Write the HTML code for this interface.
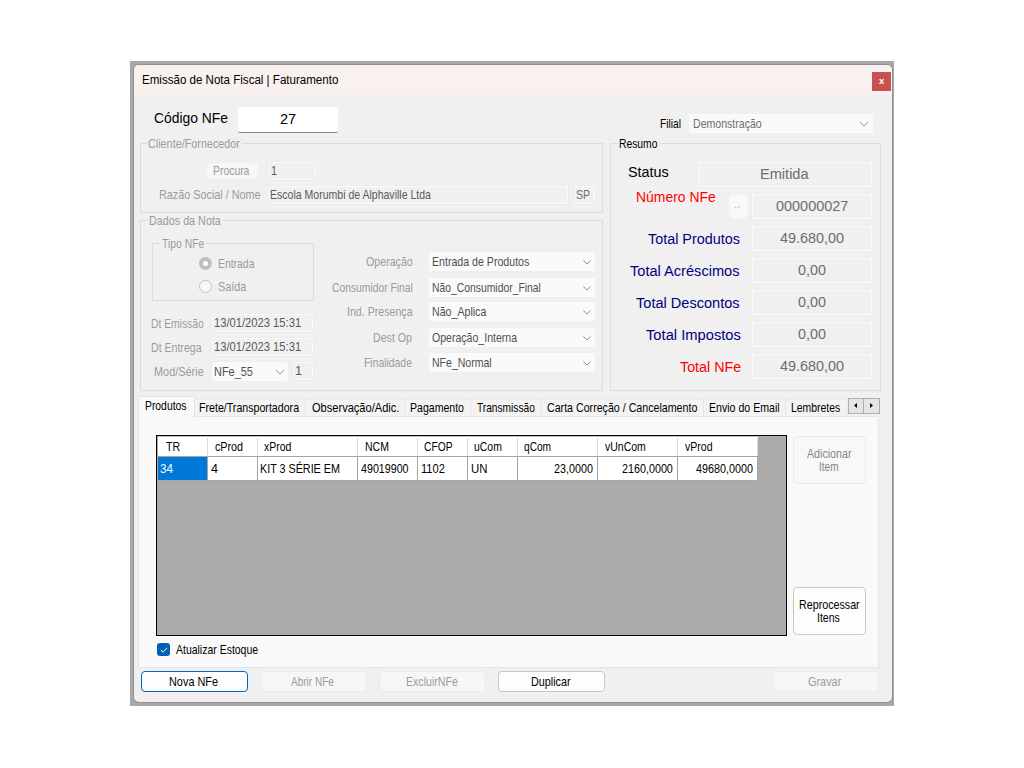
<!DOCTYPE html>
<html lang="pt-BR"><head><meta charset="utf-8"><title>Emissão de Nota Fiscal | Faturamento</title>
<style>
html,body{margin:0;padding:0;background:#fff;}
body{width:1024px;height:768px;position:relative;overflow:hidden;font-family:"Liberation Sans", sans-serif;}
.b{position:absolute;box-sizing:border-box;}
.t{position:absolute;white-space:pre;font-family:"Liberation Sans", sans-serif;transform-origin:0 0;}
svg{position:absolute;overflow:visible;}
</style></head><body>
<div class="b" style="left:130px;top:61px;width:764px;height:645px;background:#a8a8a8;"></div>
<div class="b" style="left:133px;top:64px;width:760px;height:639px;background:#929292;border-radius:6px;"></div>
<div class="b" style="left:134px;top:65px;width:758px;height:637px;background:#f0f0f0;border-radius:5px;"></div>
<div class="b" style="left:134px;top:65px;width:758px;height:30px;background:#f9f0f0;border-radius:5px 5px 0 0;"></div>
<span class="t" id="t0" style="left:141.56px;top:73.26px;font-size:12.3px;line-height:14.76px;color:#000;transform:scaleX(0.9399);">Emissão de Nota Fiscal | Faturamento</span>
<div class="b" style="left:872px;top:72px;width:19px;height:19px;background:#c75050;"></div>
<span class="t" id="t1" style="left:879.0px;top:74.91px;font-size:9.6px;line-height:11.52px;color:#fff;font-weight:700;">x</span>
<span class="t" id="t2" style="left:153.52px;top:110.26px;font-size:14.2px;line-height:17.04px;color:#000;transform:scaleX(0.9784);">Código NFe</span>
<div class="b" style="left:238px;top:107px;width:100px;height:26px;background:#fff;border-bottom:1px solid #868686;border-radius:2px;"></div>
<span class="t" id="t3" style="left:279.83px;top:111.26px;font-size:14.2px;line-height:17.04px;color:#000;transform:scaleX(1.0214);">27</span>
<span class="t" id="t4" style="left:660.49px;top:116.77px;font-size:12.6px;line-height:15.12px;color:#000;transform:scaleX(0.8125);">Filial</span>
<div class="b" style="left:689px;top:113.5px;width:183.5px;height:19.5px;background:#fafafa;border-radius:1.5px;box-shadow:0 0 0 0.5px #ededed;"></div>
<svg style="left:860.1px;top:121.65px" width="8" height="4.5" viewBox="0 0 8 4.5"><path d="M0.3 0.4 L4 4 L7.7 0.4" fill="none" stroke="#8c8c8c" stroke-width="0.95"/></svg>
<span class="t" id="t5" style="left:693.16px;top:117.17px;font-size:12.6px;line-height:15.12px;color:#6d6d6d;transform:scaleX(0.8395);">Demonstração</span>
<div class="b" style="left:140px;top:143px;width:463px;height:70px;border:1px solid #dcdcdc;"></div>
<div class="b" style="left:147px;top:142px;width:95px;height:3px;background:#f0f0f0;"></div>
<span class="t" id="t6" style="left:148.14px;top:136.77px;font-size:12.6px;line-height:15.12px;color:#9b9b9b;transform:scaleX(0.8585);">Cliente/Fornecedor</span>
<div class="b" style="left:206px;top:162px;width:53px;height:18px;background:#f7f7f7;border:1px solid #eeeeee;border-radius:4px;"></div>
<span class="t" id="t7" style="left:212.72px;top:163.97px;font-size:12.6px;line-height:15.12px;color:#9b9b9b;transform:scaleX(0.8256);">Procura</span>
<div class="b" style="left:268px;top:162px;width:48px;height:18px;background:#f0f0f0;border:1px solid #fafafa;box-shadow:0 0 0 1px #ececec;"></div>
<span class="t" id="t8" style="left:270.55px;top:163.97px;font-size:12.6px;line-height:15.12px;color:#5a5a5a;transform:scaleX(0.85);">1</span>
<span class="t" id="t9" style="left:158.64px;top:187.97px;font-size:12.6px;line-height:15.12px;color:#9b9b9b;transform:scaleX(0.859);">Razão Social / Nome</span>
<div class="b" style="left:268px;top:186px;width:300px;height:18px;background:#f0f0f0;border:1px solid #fafafa;box-shadow:0 0 0 1px #ececec;"></div>
<span class="t" id="t10" style="left:269.66px;top:187.97px;font-size:12.6px;line-height:15.12px;color:#5a5a5a;transform:scaleX(0.8359);">Escola Morumbi de Alphaville Ltda</span>
<div class="b" style="left:575px;top:186px;width:20px;height:18px;background:#f0f0f0;border:1px solid #fafafa;box-shadow:0 0 0 1px #ececec;"></div>
<span class="t" id="t11" style="left:576.47px;top:187.97px;font-size:12.6px;line-height:15.12px;color:#6d6d6d;transform:scaleX(0.8333);">SP</span>
<div class="b" style="left:140px;top:220px;width:463px;height:171px;border:1px solid #dcdcdc;"></div>
<div class="b" style="left:147.5px;top:219px;width:75px;height:3px;background:#f0f0f0;"></div>
<span class="t" id="t12" style="left:148.64px;top:213.77px;font-size:12.6px;line-height:15.12px;color:#9b9b9b;transform:scaleX(0.8554);">Dados da Nota</span>
<div class="b" style="left:152px;top:243px;width:162px;height:58px;border:1px solid #dcdcdc;"></div>
<div class="b" style="left:160px;top:242px;width:46px;height:3px;background:#f0f0f0;"></div>
<span class="t" id="t13" style="left:162.0px;top:236.77px;font-size:12.6px;line-height:15.12px;color:#9b9b9b;transform:scaleX(0.8235);">Tipo NFe</span>
<div class="b" style="left:199px;top:257px;width:13px;height:13px;background:#bfbfbf;border-radius:7px;"></div>
<div class="b" style="left:203px;top:261px;width:5px;height:5px;background:#fff;border-radius:3px;"></div>
<div class="b" style="left:199px;top:280px;width:13px;height:13px;background:#f9f9f9;border:1px solid #c0c0c0;border-radius:7px;"></div>
<span class="t" id="t14" style="left:217.67px;top:256.77px;font-size:12.6px;line-height:15.12px;color:#9b9b9b;transform:scaleX(0.8256);">Entrada</span>
<span class="t" id="t15" style="left:217.64px;top:279.57px;font-size:12.6px;line-height:15.12px;color:#9b9b9b;transform:scaleX(0.8594);">Saída</span>
<span class="t" id="t16" style="left:150.68px;top:316.97px;font-size:12.6px;line-height:15.12px;color:#9b9b9b;transform:scaleX(0.8175);">Dt Emissão</span>
<div class="b" style="left:212px;top:314px;width:101px;height:18px;background:#f0f0f0;border:1px solid #fafafa;box-shadow:0 0 0 1px #ececec;"></div>
<span class="t" id="t17" style="left:213.91px;top:315.97px;font-size:12.6px;line-height:15.12px;color:#5a5a5a;transform:scaleX(0.8887);">13/01/2023 15:31</span>
<span class="t" id="t18" style="left:150.66px;top:340.97px;font-size:12.6px;line-height:15.12px;color:#9b9b9b;transform:scaleX(0.839);">Dt Entrega</span>
<div class="b" style="left:212px;top:338px;width:101px;height:18px;background:#f0f0f0;border:1px solid #fafafa;box-shadow:0 0 0 1px #ececec;"></div>
<span class="t" id="t19" style="left:213.91px;top:339.97px;font-size:12.6px;line-height:15.12px;color:#5a5a5a;transform:scaleX(0.8887);">13/01/2023 15:31</span>
<span class="t" id="t20" style="left:153.63px;top:364.97px;font-size:12.6px;line-height:15.12px;color:#9b9b9b;transform:scaleX(0.8661);">Mod/Série</span>
<div class="b" style="left:212px;top:362px;width:76px;height:19px;background:#fafafa;border-radius:1.5px;box-shadow:0 0 0 0.5px #ededed;"></div>
<svg style="left:275.6px;top:369.9px" width="8" height="4.5" viewBox="0 0 8 4.5"><path d="M0.3 0.4 L4 4 L7.7 0.4" fill="none" stroke="#8c8c8c" stroke-width="0.95"/></svg>
<span class="t" id="t21" style="left:214.43px;top:364.97px;font-size:12.6px;line-height:15.12px;color:#505050;transform:scaleX(0.8674);">NFe_55</span>
<div class="b" style="left:293px;top:362px;width:20px;height:18px;background:#f0f0f0;border:1px solid #fafafa;box-shadow:0 0 0 1px #ececec;"></div>
<span class="t" id="t22" style="left:295px;top:363.97px;font-size:12.6px;line-height:15.12px;color:#5a5a5a;">1</span>
<span class="t" id="t23" style="left:365.5px;top:255.17px;font-size:12.6px;line-height:15.12px;color:#9b9b9b;transform:scaleX(0.8455);">Operação</span>
<div class="b" style="left:428.6px;top:252px;width:166.8px;height:19px;background:#fafafa;border-radius:1.5px;box-shadow:0 0 0 0.5px #ededed;"></div>
<svg style="left:583.0000000000001px;top:259.9px" width="8" height="4.5" viewBox="0 0 8 4.5"><path d="M0.3 0.4 L4 4 L7.7 0.4" fill="none" stroke="#8c8c8c" stroke-width="0.95"/></svg>
<span class="t" id="t24" style="left:431.96px;top:254.77px;font-size:12.6px;line-height:15.12px;color:#505050;transform:scaleX(0.8421);">Entrada de Produtos</span>
<span class="t" id="t25" style="left:331.68px;top:281.17px;font-size:12.6px;line-height:15.12px;color:#9b9b9b;transform:scaleX(0.8196);">Consumidor Final</span>
<div class="b" style="left:428.6px;top:278px;width:166.8px;height:19px;background:#fafafa;border-radius:1.5px;box-shadow:0 0 0 0.5px #ededed;"></div>
<svg style="left:583.0000000000001px;top:285.9px" width="8" height="4.5" viewBox="0 0 8 4.5"><path d="M0.3 0.4 L4 4 L7.7 0.4" fill="none" stroke="#8c8c8c" stroke-width="0.95"/></svg>
<span class="t" id="t26" style="left:431.98px;top:280.77px;font-size:12.6px;line-height:15.12px;color:#505050;transform:scaleX(0.8229);">Não_Consumidor_Final</span>
<span class="t" id="t27" style="left:346.95px;top:305.17px;font-size:12.6px;line-height:15.12px;color:#9b9b9b;transform:scaleX(0.8442);">Ind. Presença</span>
<div class="b" style="left:428.6px;top:302px;width:166.8px;height:19px;background:#fafafa;border-radius:1.5px;box-shadow:0 0 0 0.5px #ededed;"></div>
<svg style="left:583.0000000000001px;top:309.9px" width="8" height="4.5" viewBox="0 0 8 4.5"><path d="M0.3 0.4 L4 4 L7.7 0.4" fill="none" stroke="#8c8c8c" stroke-width="0.95"/></svg>
<span class="t" id="t28" style="left:431.96px;top:304.77px;font-size:12.6px;line-height:15.12px;color:#505050;transform:scaleX(0.8438);">Não_Aplica</span>
<span class="t" id="t29" style="left:372.56px;top:331.17px;font-size:12.6px;line-height:15.12px;color:#9b9b9b;transform:scaleX(0.8444);">Dest Op</span>
<div class="b" style="left:428.6px;top:328px;width:166.8px;height:19px;background:#fafafa;border-radius:1.5px;box-shadow:0 0 0 0.5px #ededed;"></div>
<svg style="left:583.0000000000001px;top:335.9px" width="8" height="4.5" viewBox="0 0 8 4.5"><path d="M0.3 0.4 L4 4 L7.7 0.4" fill="none" stroke="#8c8c8c" stroke-width="0.95"/></svg>
<span class="t" id="t30" style="left:432.2px;top:330.77px;font-size:12.6px;line-height:15.12px;color:#505050;transform:scaleX(0.8382);">Operação_Interna</span>
<span class="t" id="t31" style="left:363.77px;top:356.17px;font-size:12.6px;line-height:15.12px;color:#9b9b9b;transform:scaleX(0.8246);">Finalidade</span>
<div class="b" style="left:428.6px;top:353px;width:166.8px;height:19px;background:#fafafa;border-radius:1.5px;box-shadow:0 0 0 0.5px #ededed;"></div>
<svg style="left:583.0000000000001px;top:360.9px" width="8" height="4.5" viewBox="0 0 8 4.5"><path d="M0.3 0.4 L4 4 L7.7 0.4" fill="none" stroke="#8c8c8c" stroke-width="0.95"/></svg>
<span class="t" id="t32" style="left:431.96px;top:355.77px;font-size:12.6px;line-height:15.12px;color:#505050;transform:scaleX(0.8357);">NFe_Normal</span>
<div class="b" style="left:610px;top:143px;width:271px;height:248px;border:1px solid #dcdcdc;"></div>
<div class="b" style="left:618.3px;top:142px;width:42px;height:3px;background:#f0f0f0;"></div>
<span class="t" id="t33" style="left:619.48px;top:136.97px;font-size:12.6px;line-height:15.12px;color:#000;transform:scaleX(0.8196);">Resumo</span>
<span class="t" id="t34" style="left:628.02px;top:163.89px;font-size:14.7px;line-height:17.64px;color:#000;transform:scaleX(0.98);">Status</span>
<div class="b" style="left:698px;top:162px;width:174px;height:25px;background:#f0f0f0;border:1px solid #fafafa;box-shadow:0 0 0 1px #ececec;"></div>
<span class="t" id="t35" style="left:759.91px;top:165.89px;font-size:14.7px;line-height:17.64px;color:#6d6d6d;transform:scaleX(0.9917);">Emitida</span>
<span class="t" id="t36" style="left:635.65px;top:188.89px;font-size:14.7px;line-height:17.64px;color:#ff0000;transform:scaleX(0.9494);">Número NFe</span>
<div class="b" style="left:729px;top:194px;width:19px;height:25px;background:#f9f9f9;border:1px solid #f4f4f4;border-radius:4px;"></div>
<span class="t" id="t37" style="left:733.78px;top:197.37px;font-size:12.6px;line-height:15.12px;color:#b0b0b0;transform:scaleX(0.92);">..</span>
<div class="b" style="left:752px;top:194px;width:120px;height:25px;background:#f0f0f0;border:1px solid #fafafa;box-shadow:0 0 0 1px #ececec;"></div>
<span class="t" id="t38" style="left:775.8px;top:197.89px;font-size:14.7px;line-height:17.64px;color:#6d6d6d;transform:scaleX(0.9836);">000000027</span>
<span class="t" id="t39" style="left:648.4px;top:230.59px;font-size:14.7px;line-height:17.64px;color:#00007f;transform:scaleX(0.9787);">Total Produtos</span>
<div class="b" style="left:752px;top:226px;width:120px;height:25px;background:#f0f0f0;border:1px solid #fafafa;box-shadow:0 0 0 1px #ececec;"></div>
<span class="t" id="t40" style="left:779.8px;top:229.89px;font-size:14.7px;line-height:17.64px;color:#6d6d6d;transform:scaleX(0.9815);">49.680,00</span>
<span class="t" id="t41" style="left:630.1px;top:262.59px;font-size:14.7px;line-height:17.64px;color:#00007f;transform:scaleX(0.9936);">Total Acréscimos</span>
<div class="b" style="left:752px;top:258px;width:120px;height:25px;background:#f0f0f0;border:1px solid #fafafa;box-shadow:0 0 0 1px #ececec;"></div>
<span class="t" id="t42" style="left:798.05px;top:261.89px;font-size:14.7px;line-height:17.64px;color:#6d6d6d;transform:scaleX(0.975);">0,00</span>
<span class="t" id="t43" style="left:636.3px;top:294.59px;font-size:14.7px;line-height:17.64px;color:#00007f;transform:scaleX(0.9913);">Total Descontos</span>
<div class="b" style="left:752px;top:290px;width:120px;height:25px;background:#f0f0f0;border:1px solid #fafafa;box-shadow:0 0 0 1px #ececec;"></div>
<span class="t" id="t44" style="left:798.05px;top:293.89px;font-size:14.7px;line-height:17.64px;color:#6d6d6d;transform:scaleX(0.975);">0,00</span>
<span class="t" id="t45" style="left:646.2px;top:326.59px;font-size:14.7px;line-height:17.64px;color:#00007f;transform:scaleX(1.0021);">Total Impostos</span>
<div class="b" style="left:752px;top:322px;width:120px;height:25px;background:#f0f0f0;border:1px solid #fafafa;box-shadow:0 0 0 1px #ececec;"></div>
<span class="t" id="t46" style="left:798.05px;top:325.89px;font-size:14.7px;line-height:17.64px;color:#6d6d6d;transform:scaleX(0.975);">0,00</span>
<span class="t" id="t47" style="left:680.0px;top:358.59px;font-size:14.7px;line-height:17.64px;color:#ff0000;transform:scaleX(0.9742);">Total NFe</span>
<div class="b" style="left:752px;top:354px;width:120px;height:25px;background:#f0f0f0;border:1px solid #fafafa;box-shadow:0 0 0 1px #ececec;"></div>
<span class="t" id="t48" style="left:779.8px;top:357.89px;font-size:14.7px;line-height:17.64px;color:#6d6d6d;transform:scaleX(0.9815);">49.680,00</span>
<div class="b" style="left:138px;top:416px;width:741px;height:252px;background:#f9f9f9;border:1px solid #e5e5e5;"></div>
<div class="b" style="left:138px;top:396px;width:57px;height:22px;background:#f9f9f9;border:1px solid #e5e5e5;border-bottom:none;"></div>
<span class="t" id="t49" style="left:145.38px;top:398.97px;font-size:12.6px;line-height:15.12px;color:#000;transform:scaleX(0.8224);">Produtos</span>
<div class="b" style="left:195px;top:399px;width:111px;height:18px;background:#f3f3f3;border-right:1px solid #e6e6e6;border-top:1px solid #eaeaea;border-bottom:1px solid #e6e6e6;"></div>
<span class="t" id="t50" style="left:198.55px;top:400.97px;font-size:12.6px;line-height:15.12px;color:#000;transform:scaleX(0.8441);">Frete/Transportadora</span>
<div class="b" style="left:306px;top:399px;width:99px;height:18px;background:#f3f3f3;border-right:1px solid #e6e6e6;border-top:1px solid #eaeaea;border-bottom:1px solid #e6e6e6;"></div>
<span class="t" id="t51" style="left:311.6px;top:400.97px;font-size:12.6px;line-height:15.12px;color:#000;transform:scaleX(0.8788);">Observação/Adic.</span>
<div class="b" style="left:405px;top:399px;width:66px;height:18px;background:#f3f3f3;border-right:1px solid #e6e6e6;border-top:1px solid #eaeaea;border-bottom:1px solid #e6e6e6;"></div>
<span class="t" id="t52" style="left:410.26px;top:400.97px;font-size:12.6px;line-height:15.12px;color:#000;transform:scaleX(0.8381);">Pagamento</span>
<div class="b" style="left:471px;top:399px;width:71px;height:18px;background:#f3f3f3;border-right:1px solid #e6e6e6;border-top:1px solid #eaeaea;border-bottom:1px solid #e6e6e6;"></div>
<span class="t" id="t53" style="left:476.95px;top:400.97px;font-size:12.6px;line-height:15.12px;color:#000;transform:scaleX(0.807);">Transmissão</span>
<div class="b" style="left:542px;top:399px;width:162px;height:18px;background:#f3f3f3;border-right:1px solid #e6e6e6;border-top:1px solid #eaeaea;border-bottom:1px solid #e6e6e6;"></div>
<span class="t" id="t54" style="left:547.15px;top:400.97px;font-size:12.6px;line-height:15.12px;color:#000;transform:scaleX(0.8455);">Carta Correção / Cancelamento</span>
<div class="b" style="left:704px;top:399px;width:82px;height:18px;background:#f3f3f3;border-right:1px solid #e6e6e6;border-top:1px solid #eaeaea;border-bottom:1px solid #e6e6e6;"></div>
<span class="t" id="t55" style="left:709.36px;top:400.97px;font-size:12.6px;line-height:15.12px;color:#000;transform:scaleX(0.8415);">Envio do Email</span>
<div class="b" style="left:786px;top:399px;width:61px;height:18px;background:#f3f3f3;border-right:1px solid #e6e6e6;border-top:1px solid #eaeaea;border-bottom:1px solid #e6e6e6;"></div>
<span class="t" id="t56" style="left:791.37px;top:400.97px;font-size:12.6px;line-height:15.12px;color:#000;transform:scaleX(0.8276);">Lembretes</span>
<div class="b" style="left:848px;top:398px;width:16px;height:16px;background:#e5e5e5;border:1px solid #adadad;"></div>
<div class="b" style="left:863px;top:398px;width:17px;height:16px;background:#e5e5e5;border:1px solid #adadad;"></div>
<svg style="left:854px;top:403px" width="3" height="5" viewBox="0 0 3 5"><path d="M3 0 L3 5 L0 2.5 Z" fill="#000"/></svg>
<svg style="left:870px;top:403px" width="3" height="5" viewBox="0 0 3 5"><path d="M0 0 L0 5 L3 2.5 Z" fill="#000"/></svg>
<div class="b" style="left:156px;top:435px;width:631px;height:201px;background:#ababab;border:1px solid #000;box-shadow:0 0 0 1px #fff;"></div>
<div class="b" style="left:157px;top:436px;width:601px;height:21px;background:#fff;border-bottom:1px solid #a5a5a5;border-top:1px solid #c4c4c4;"></div>
<div class="b" style="left:157px;top:457px;width:601px;height:24px;background:#fff;border-bottom:1px solid #a5a5a5;"></div>
<div class="b" style="left:157px;top:436px;width:1px;height:45px;background:#a8a8a8;"></div>
<div class="b" style="left:158px;top:457px;width:49px;height:23px;background:#0078d7;"></div>
<div class="b" style="left:207px;top:438px;width:1px;height:18px;background:#dadada;"></div>
<div class="b" style="left:207px;top:457px;width:1px;height:24px;background:#a5a5a5;"></div>
<span class="t" id="t57" style="left:165.5px;top:439.97px;font-size:12.6px;line-height:15.12px;color:#000;transform:scaleX(0.8438);">TR</span>
<div class="b" style="left:257px;top:438px;width:1px;height:18px;background:#dadada;"></div>
<div class="b" style="left:257px;top:457px;width:1px;height:24px;background:#a5a5a5;"></div>
<span class="t" id="t58" style="left:214.7px;top:439.97px;font-size:12.6px;line-height:15.12px;color:#000;transform:scaleX(0.8531);">cProd</span>
<div class="b" style="left:357px;top:438px;width:1px;height:18px;background:#dadada;"></div>
<div class="b" style="left:357px;top:457px;width:1px;height:24px;background:#a5a5a5;"></div>
<span class="t" id="t59" style="left:264.3px;top:439.97px;font-size:12.6px;line-height:15.12px;color:#000;transform:scaleX(0.8344);">xProd</span>
<div class="b" style="left:417px;top:438px;width:1px;height:18px;background:#dadada;"></div>
<div class="b" style="left:417px;top:457px;width:1px;height:24px;background:#a5a5a5;"></div>
<span class="t" id="t60" style="left:364.77px;top:439.97px;font-size:12.6px;line-height:15.12px;color:#000;transform:scaleX(0.8333);">NCM</span>
<div class="b" style="left:467px;top:438px;width:1px;height:18px;background:#dadada;"></div>
<div class="b" style="left:467px;top:457px;width:1px;height:24px;background:#a5a5a5;"></div>
<span class="t" id="t61" style="left:424.08px;top:439.97px;font-size:12.6px;line-height:15.12px;color:#000;transform:scaleX(0.8182);">CFOP</span>
<div class="b" style="left:517px;top:438px;width:1px;height:18px;background:#dadada;"></div>
<div class="b" style="left:517px;top:457px;width:1px;height:24px;background:#a5a5a5;"></div>
<span class="t" id="t62" style="left:473.77px;top:439.97px;font-size:12.6px;line-height:15.12px;color:#000;transform:scaleX(0.8281);">uCom</span>
<div class="b" style="left:597px;top:438px;width:1px;height:18px;background:#dadada;"></div>
<div class="b" style="left:597px;top:457px;width:1px;height:24px;background:#a5a5a5;"></div>
<span class="t" id="t63" style="left:524.1px;top:439.97px;font-size:12.6px;line-height:15.12px;color:#000;transform:scaleX(0.8061);">qCom</span>
<div class="b" style="left:677px;top:438px;width:1px;height:18px;background:#dadada;"></div>
<div class="b" style="left:677px;top:457px;width:1px;height:24px;background:#a5a5a5;"></div>
<span class="t" id="t64" style="left:604.5px;top:439.97px;font-size:12.6px;line-height:15.12px;color:#000;transform:scaleX(0.8333);">vUnCom</span>
<div class="b" style="left:757px;top:438px;width:1px;height:18px;background:#dadada;"></div>
<div class="b" style="left:757px;top:457px;width:1px;height:24px;background:#a5a5a5;"></div>
<span class="t" id="t65" style="left:684.5px;top:439.97px;font-size:12.6px;line-height:15.12px;color:#000;transform:scaleX(0.8375);">vProd</span>
<span class="t" id="t66" style="left:160.48px;top:461.97px;font-size:12.6px;line-height:15.12px;color:#fff;transform:scaleX(0.9231);">34</span>
<span class="t" id="t67" style="left:211px;top:461.97px;font-size:12.6px;line-height:15.12px;color:#000;">4</span>
<span class="t" id="t68" style="left:260.35px;top:461.97px;font-size:12.6px;line-height:15.12px;color:#000;transform:scaleX(0.8543);">KIT 3 SÉRIE EM</span>
<span class="t" id="t69" style="left:361.0px;top:461.97px;font-size:12.6px;line-height:15.12px;color:#000;transform:scaleX(0.8482);">49019900</span>
<span class="t" id="t70" style="left:420.62px;top:461.97px;font-size:12.6px;line-height:15.12px;color:#000;transform:scaleX(0.8846);">1102</span>
<span class="t" id="t71" style="left:470.79px;top:461.97px;font-size:12.6px;line-height:15.12px;color:#000;transform:scaleX(0.9062);">UN</span>
<span class="t" id="t72" style="left:553.5px;top:461.97px;font-size:12.6px;line-height:15.12px;color:#000;transform:scaleX(0.8556);">23,0000</span>
<span class="t" id="t73" style="left:622.0px;top:461.97px;font-size:12.6px;line-height:15.12px;color:#000;transform:scaleX(0.8542);">2160,0000</span>
<span class="t" id="t74" style="left:695.8px;top:461.97px;font-size:12.6px;line-height:15.12px;color:#000;transform:scaleX(0.8576);">49680,0000</span>
<div class="b" style="left:793px;top:436px;width:73px;height:48px;background:#f8f8f8;border:1px solid #ebebeb;border-radius:4px;"></div>
<span class="t" id="t75" style="left:806.8px;top:446.97px;font-size:12.6px;line-height:15.12px;color:#858585;transform:scaleX(0.8462);">Adicionar</span>
<span class="t" id="t76" style="left:819.2px;top:459.97px;font-size:12.6px;line-height:15.12px;color:#858585;transform:scaleX(0.8);">Item</span>
<div class="b" style="left:793px;top:587px;width:73px;height:48px;background:#fdfdfd;border:1px solid #c8c8c8;border-radius:4px;"></div>
<span class="t" id="t77" style="left:798.9px;top:597.97px;font-size:12.6px;line-height:15.12px;color:#000;transform:scaleX(0.85);">Reprocessar</span>
<span class="t" id="t78" style="left:817.26px;top:610.97px;font-size:12.6px;line-height:15.12px;color:#000;transform:scaleX(0.8385);">Itens</span>
<div class="b" style="left:157px;top:643px;width:13px;height:13px;background:#005fb8;border-radius:3px;"></div>
<svg style="left:159.5px;top:646.5px" width="8" height="6" viewBox="0 0 8 6"><path d="M0.8 3 L3 5.2 L7.3 0.8" fill="none" stroke="#fff" stroke-width="1"/></svg>
<span class="t" id="t79" style="left:176.0px;top:642.97px;font-size:12.6px;line-height:15.12px;color:#000;transform:scaleX(0.8316);">Atualizar Estoque</span>
<div class="b" style="left:141px;top:671px;width:107px;height:21px;background:#fdfdfd;border:1px solid #0067c0;border-radius:4px;"></div>
<span class="t" id="t80" style="left:168.53px;top:674.97px;font-size:12.6px;line-height:15.12px;color:#000;transform:scaleX(0.8655);">Nova NFe</span>
<div class="b" style="left:260px;top:671px;width:107px;height:21px;background:#f6f6f6;border:1px solid #ebebeb;border-radius:4px;"></div>
<span class="t" id="t81" style="left:291.2px;top:674.97px;font-size:12.6px;line-height:15.12px;color:#9b9b9b;transform:scaleX(0.7963);">Abrir NFe</span>
<div class="b" style="left:379px;top:671px;width:107px;height:21px;background:#f6f6f6;border:1px solid #ebebeb;border-radius:4px;"></div>
<span class="t" id="t82" style="left:406.41px;top:674.97px;font-size:12.6px;line-height:15.12px;color:#9b9b9b;transform:scaleX(0.8417);">ExcluirNFe</span>
<div class="b" style="left:498px;top:671px;width:107px;height:21px;background:#fdfdfd;border:1px solid #c8c8c8;border-radius:4px;"></div>
<span class="t" id="t83" style="left:531.39px;top:674.97px;font-size:12.6px;line-height:15.12px;color:#000;transform:scaleX(0.8556);">Duplicar</span>
<div class="b" style="left:772px;top:671px;width:107px;height:21px;background:#f6f6f6;border:1px solid #ececec;border-radius:4px;"></div>
<span class="t" id="t84" style="left:808.13px;top:674.97px;font-size:12.6px;line-height:15.12px;color:#9b9b9b;transform:scaleX(0.8649);">Gravar</span>
</body></html>
